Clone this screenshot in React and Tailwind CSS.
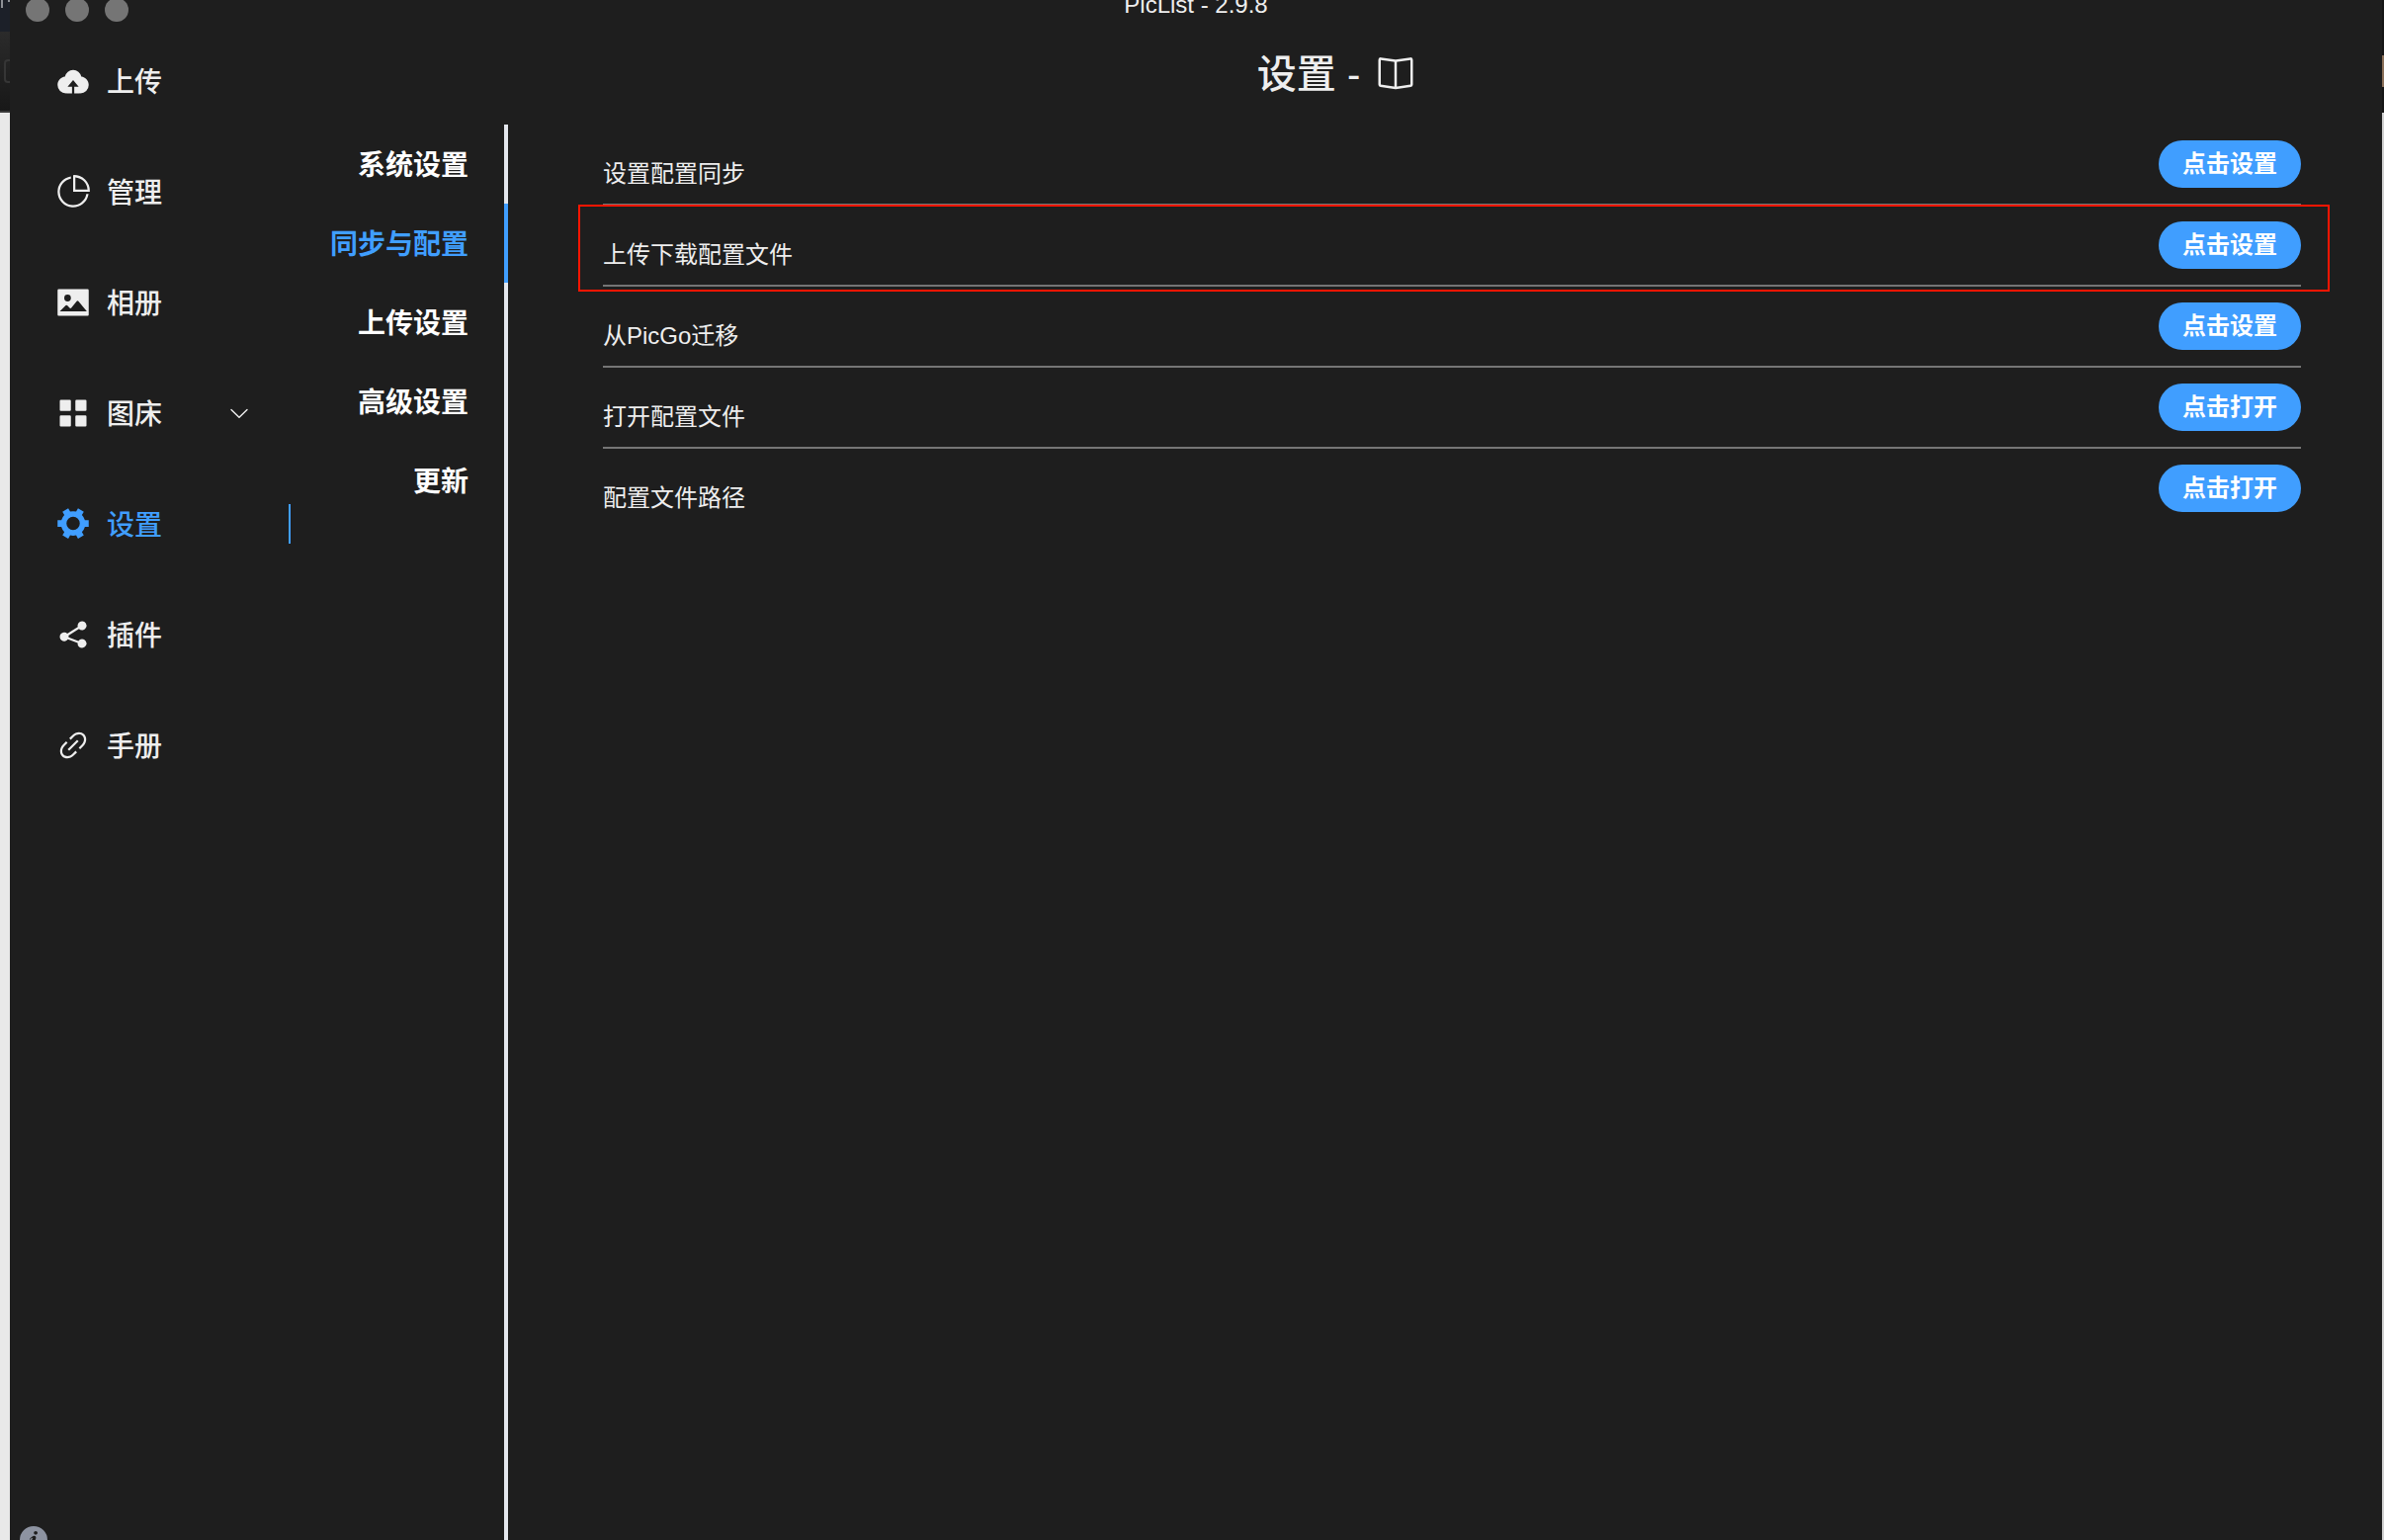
import React, { useState } from "react";

const ICONS = {
  upload: [
    "M544 864V672h128L512 480 352 672h128v192H320v-1.6c-5.376.32-10.496 1.6-16 1.6A240 240 0 0 1 64 624c0-123.136 93.12-223.488 212.608-237.248A239.808 239.808 0 0 1 512 192a239.872 239.872 0 0 1 235.456 194.752c119.488 13.76 212.48 114.112 212.48 237.248a240 240 0 0 1-240 240c-5.376 0-10.56-1.28-16-1.6v1.6z",
  ],
  pie: [
    "M448 68.48v64.832A384.128 384.128 0 0 0 512 896a384.128 384.128 0 0 0 378.688-320h64.768A448.128 448.128 0 0 1 64 512 448.128 448.128 0 0 1 448 68.48z",
    "M576 97.28V448h350.72A384.064 384.064 0 0 0 576 97.28zM512 64V33.152A448 448 0 0 1 990.848 512H512z",
  ],
  picture: [
    "M96 896a32 32 0 0 1-32-32V160a32 32 0 0 1 32-32h832a32 32 0 0 1 32 32v704a32 32 0 0 1-32 32zm315.52-228.48-68.928-68.928a32 32 0 0 0-45.248 0L128 768.064h778.688l-242.112-290.56a32 32 0 0 0-49.216 0L458.752 665.408a32 32 0 0 1-47.232 2.112M256 384a96 96 0 1 0 192.064-.064A96 96 0 0 0 256 384",
  ],
  menu: [
    "M160 448a32 32 0 0 1-32-32V160a32 32 0 0 1 32-32h256a32 32 0 0 1 32 32v256a32 32 0 0 1-32 32zm448 0a32 32 0 0 1-32-32V160a32 32 0 0 1 32-32h256a32 32 0 0 1 32 32v256a32 32 0 0 1-32 32zM160 896a32 32 0 0 1-32-32V608a32 32 0 0 1 32-32h256a32 32 0 0 1 32 32v256a32 32 0 0 1-32 32zm448 0a32 32 0 0 1-32-32V608a32 32 0 0 1 32-32h256a32 32 0 0 1 32 32v256a32 32 0 0 1-32 32z",
  ],
  tools: [
    "M764.416 254.72a351.68 351.68 0 0 1 86.336 149.184H960v192.064H850.752a351.68 351.68 0 0 1-86.336 149.312l54.72 94.72-166.272 96-54.592-94.72a352.64 352.64 0 0 1-172.48 0L371.136 936l-166.272-96 54.72-94.72a351.68 351.68 0 0 1-86.336-149.312H64v-192h109.248a351.68 351.68 0 0 1 86.336-149.312L204.8 160l166.208-96h.192l54.656 94.592a352.64 352.64 0 0 1 172.48 0L652.8 64h.128L819.2 160zM704 499.968a192 192 0 1 0-384 0 192 192 0 0 0 384 0",
  ],
  share: [
    "m679.872 348.8-301.76 188.608a127.808 127.808 0 0 1 5.12 52.16l279.936 104.96a128 128 0 1 1-22.464 59.904l-279.872-104.96a128 128 0 1 1-16.64-166.272l301.696-188.608a128 128 0 1 1 33.92 54.272z",
  ],
  link: [
    "M715.648 625.152 670.4 579.904l90.496-90.56c75.008-74.944 85.12-186.368 22.656-248.896-62.528-62.464-173.952-52.352-248.96 22.656L444.16 353.6l-45.248-45.248 90.496-90.496c100.032-99.968 251.968-110.08 339.456-22.656 87.488 87.488 77.312 239.424-22.656 339.456l-90.496 90.496zm-90.496 90.496-90.496 90.496C434.624 906.112 282.688 916.224 195.2 828.8c-87.488-87.488-77.312-239.424 22.656-339.456l90.496-90.496 45.248 45.248-90.496 90.56c-75.008 74.944-85.12 186.368-22.656 248.896 62.528 62.464 173.952 52.352 248.96-22.656l90.496-90.496zm0-362.048 45.248 45.248L398.848 670.4 353.6 625.152z",
  ],
  reading: [
    "m512 863.36 384-54.848v-638.72L525.568 222.72a96 96 0 0 1-27.136 0L128 169.792v638.72zM137.024 106.432l370.432 52.928a32 32 0 0 0 9.088 0l370.432-52.928A64 64 0 0 1 960 169.792v638.72a64 64 0 0 1-54.976 63.36l-388.48 55.488a32 32 0 0 1-9.088 0l-388.48-55.488A64 64 0 0 1 64 808.512v-638.72a64 64 0 0 1 73.024-63.36z",
    "M480 192h64v704h-64z",
  ],
  arrowDown: [
    "M831.872 340.864 512 652.672 192.128 340.864a30.592 30.592 0 0 0-42.752 0 29.12 29.12 0 0 0 0 41.6L489.664 714.24a32 32 0 0 0 44.672 0l340.288-331.712a29.12 29.12 0 0 0 0-41.728 30.592 30.592 0 0 0-42.752 0z",
  ],
  info: [
    "M512 64a448 448 0 1 1 0 896.064A448 448 0 0 1 512 64m67.2 275.072c33.28 0 60.288-23.104 60.288-57.344s-27.072-57.344-60.288-57.344c-33.28 0-60.16 23.104-60.16 57.344s26.88 57.344 60.16 57.344M590.912 699.2c0-6.848 2.368-24.64 1.024-34.752l-52.608 60.544c-10.88 11.456-24.512 19.392-30.912 17.28a12.992 12.992 0 0 1-8.256-14.72l87.68-276.992c7.168-35.136-12.544-67.2-54.336-71.296-44.096 0-108.992 44.736-148.48 101.504 0 6.784-1.28 23.68.064 33.792l52.544-60.608c10.88-11.328 23.552-19.328 29.952-17.152a12.8 12.8 0 0 1 7.808 16.128L388.48 728.576c-10.048 32.256 8.96 63.872 55.04 71.04 67.84 0 107.904-43.648 147.456-100.416z",
  ],
};

const MENU = [
  { id: "upload", label: "上传", icon: "upload" },
  { id: "manage", label: "管理", icon: "pie" },
  { id: "gallery", label: "相册", icon: "picture" },
  { id: "picbed", label: "图床", icon: "menu", hasChildren: true },
  { id: "setting", label: "设置", icon: "tools" },
  { id: "plugin", label: "插件", icon: "share" },
  { id: "manual", label: "手册", icon: "link" },
];

const TABS = ["系统设置", "同步与配置", "上传设置", "高级设置", "更新"];

const ROWS = [
  { id: "sync", label: "设置配置同步", action: "点击设置" },
  { id: "transfer", label: "上传下载配置文件", action: "点击设置", marked: true },
  { id: "migrate", label: "从PicGo迁移", action: "点击设置" },
  { id: "open", label: "打开配置文件", action: "点击打开" },
  { id: "path", label: "配置文件路径", action: "点击打开" },
];

function Icon({ name, className }) {
  return (
    <svg viewBox="0 0 1024 1024" fill="currentColor" aria-hidden="true" className={`shrink-0 ${className}`}>
      {ICONS[name].map((d) => (
        <path key={d} d={d} />
      ))}
    </svg>
  );
}

export default function App() {
  const [page, setPage] = useState("setting");
  const [tab, setTab] = useState("同步与配置");

  return (
    <div className="flex h-screen overflow-hidden bg-[#1e1e1e] font-['Liberation_Sans','Noto_Sans_CJK_SC',sans-serif] text-[#eeeeee]">
      {/* Desktop showing behind the window */}
      <div className="flex w-2.5 shrink-0 flex-col overflow-hidden bg-[#e9e9e9]">
        <div className="flex h-8 shrink-0 items-start justify-between bg-[#1c2029] pl-px">
          <span className="h-2 w-0.5 bg-[#8d9096]" />
          <span className="h-0.5 w-0.5 bg-[#8d9096]" />
        </div>
        <div className="h-[82px] shrink-0 border-b-2 border-[#3a3a3a] bg-linear-to-b from-[#2b2b2b] to-[#181818] pt-7 pl-1">
          <div className="h-6 w-4 rounded border-2 border-[#363636]" />
        </div>
      </div>

      <div className="flex min-w-0 flex-1 flex-col">
        {/* Title bar */}
        <header className="relative flex h-5 shrink-0 items-center gap-4 pl-4">
          <span className="size-6 shrink-0 rounded-full bg-[#757575]" />
          <span className="size-6 shrink-0 rounded-full bg-[#757575]" />
          <span className="size-6 shrink-0 rounded-full bg-[#757575]" />
          <p className="absolute inset-x-0 top-0 text-center text-2xl leading-[10px]">PicList - 2.9.8</p>
        </header>

        <div className="flex min-h-0 flex-1">
          {/* Sidebar */}
          <aside className="flex w-[284px] shrink-0 flex-col">
            <nav className="flex flex-1 flex-col pt-1.5">
              {MENU.map((item) => (
                <button
                  key={item.id}
                  type="button"
                  onClick={() => setPage(item.id)}
                  className={`flex h-28 items-center pl-10 text-[28px] font-medium ${
                    page === item.id ? "text-[#409eff]" : "text-[#eeeeee]"
                  }`}
                >
                  <span className="mr-2.5 flex w-12 justify-center">
                    <Icon name={item.icon} className="size-9" />
                  </span>
                  <span className="pt-1">{item.label}</span>
                  {item.hasChildren && <Icon name="arrowDown" className="mr-10 ml-auto size-6" />}
                  {page === item.id && <span className="ml-auto h-10 w-0.5 bg-[#409eff]" />}
                </button>
              ))}
            </nav>
            <button type="button" aria-label="info" className="flex h-4 items-start pl-2 text-[#8d93a1]">
              <Icon name="info" className="size-8" />
            </button>
          </aside>

          {/* Main Panel */}
          <main className="flex min-w-0 flex-1 flex-col">
            <h1 className="flex h-[106px] shrink-0 items-center justify-center gap-4 pt-0.5 text-[40px] font-medium">
              <span className="pt-0.5">设置 -</span>
              <a href="#manual" aria-label="手册">
                <Icon name="reading" className="size-10" />
              </a>
            </h1>

            <div className="flex min-h-0 flex-1">
              <div className="flex w-[220px] shrink-0 flex-col">
                {TABS.map((name) => (
                  <button
                    key={name}
                    type="button"
                    onClick={() => setTab(name)}
                    className={`h-20 shrink-0 border-r-4 pt-1 pr-9 text-right text-[28px] font-bold ${
                      tab === name ? "border-[#409eff] text-[#409eff]" : "border-[#e4e7ed] text-white"
                    }`}
                  >
                    {name}
                  </button>
                ))}
                <div className="flex-1 border-r-4 border-[#e4e7ed]" />
              </div>

              <div className="min-w-0 flex-1 pr-[82px] pl-24">
                {ROWS.map((row) => (
                  <div
                    key={row.id}
                    className="relative flex h-[82px] items-center justify-between border-b-2 border-[#757575] last:border-transparent"
                  >
                    <label htmlFor={row.id} className="pt-5 text-2xl">
                      {row.label}
                    </label>
                    <button
                      id={row.id}
                      type="button"
                      className="h-12 rounded-full bg-[#409eff] px-6 text-2xl font-bold text-white"
                    >
                      {row.action}
                    </button>
                    {row.marked && (
                      <div className="pointer-events-none absolute -top-px -right-[29px] -bottom-[7px] -left-[25px] border-2 border-[#ff1500]" />
                    )}
                  </div>
                ))}
              </div>
            </div>
          </main>
        </div>
      </div>

      <div className="flex w-0.5 shrink-0 flex-col bg-[#d0d0d0]">
        <div className="h-14 bg-[#161616]" />
        <div className="h-8 bg-[#8a6f58]" />
        <div className="h-[26px] bg-[#161616]" />
      </div>
    </div>
  );
}
